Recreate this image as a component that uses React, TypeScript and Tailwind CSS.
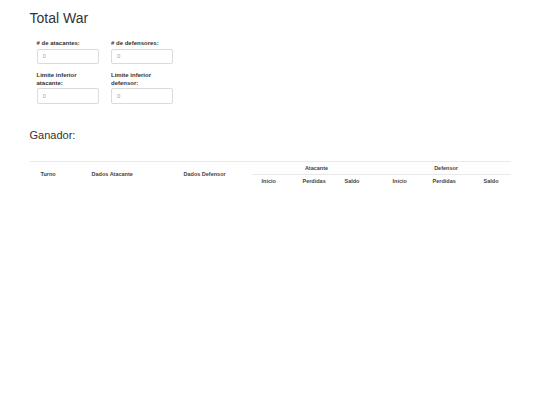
import React from "react";

function Field({ label }: { label: string }) {
  return (
    <div className="flex flex-col">
      <label className="text-[6px] leading-[8px] font-bold text-[#333]">{label}</label>
      <input
        placeholder="0"
        className="mt-[1.5px] w-[62px] h-[15.5px] border border-[#dadada] rounded-[2px] pl-[5px] text-[6px] text-[#555] placeholder:text-[#a0a0a0] outline-none bg-white"
      />
    </div>
  );
}

export default function App() {
  return (
    <div className="w-[540px] h-[405px] overflow-hidden bg-white text-[#333] font-['Liberation_Sans',Arial,sans-serif]">
      <div className="pl-[29.5px] pr-[29.5px] pt-[9.5px]">
        <h1 className="text-[14px] leading-[16px] font-normal">Total War</h1>
        <div className="ml-[7px] mt-[13.5px] grid grid-cols-[62px_62px] gap-x-[12.5px] gap-y-[6.5px]">
          <Field label="# de atacantes:" />
          <Field label="# de defensores:" />
          <Field label="Limite inferior atacante:" />
          <Field label="Limite inferior defensor:" />
        </div>
        <h2 className="mt-[24.5px] text-[11px] leading-[14px] font-normal">Ganador:</h2>
        <table className="mt-[18.5px] w-[481px] table-fixed border-collapse text-[5.5px] font-bold text-[#444]">
          <colgroup>
            <col className="w-[51px]" />
            <col className="w-[92px]" />
            <col className="w-[79px]" />
            <col className="w-[41px]" />
            <col className="w-[42px]" />
            <col className="w-[47px]" />
            <col className="w-[40px]" />
            <col className="w-[51px]" />
            <col className="w-[38px]" />
          </colgroup>
          <thead>
            <tr className="h-[13.5px]">
              <th rowSpan={2} className="border-t border-[#e9e9e9] text-left pl-[11px] align-middle">Turno</th>
              <th rowSpan={2} className="border-t border-[#e9e9e9] text-left pl-[11px] align-middle">Dados Atacante</th>
              <th rowSpan={2} className="border-t border-[#e9e9e9] text-left pl-[11px] align-middle">Dados Defensor</th>
              <th colSpan={3} className="border-t border-[#e9e9e9] text-center align-middle">Atacante</th>
              <th colSpan={3} className="border-t border-[#e9e9e9] text-center align-middle">Defensor</th>
            </tr>
            <tr className="h-[13px]">
              <th className="border-t border-[#e9e9e9] text-left pl-[10px] align-middle">Inicio</th>
              <th className="border-t border-[#e9e9e9] text-left pl-[10px] align-middle">Perdidas</th>
              <th className="border-t border-[#e9e9e9] text-left pl-[10px] align-middle">Saldo</th>
              <th className="border-t border-[#e9e9e9] text-left pl-[11px] align-middle">Inicio</th>
              <th className="border-t border-[#e9e9e9] text-left pl-[11px] align-middle">Perdidas</th>
              <th className="border-t border-[#e9e9e9] text-left pl-[11px] align-middle">Saldo</th>
            </tr>
          </thead>
          <tbody></tbody>
        </table>
      </div>
    </div>
  );
}
